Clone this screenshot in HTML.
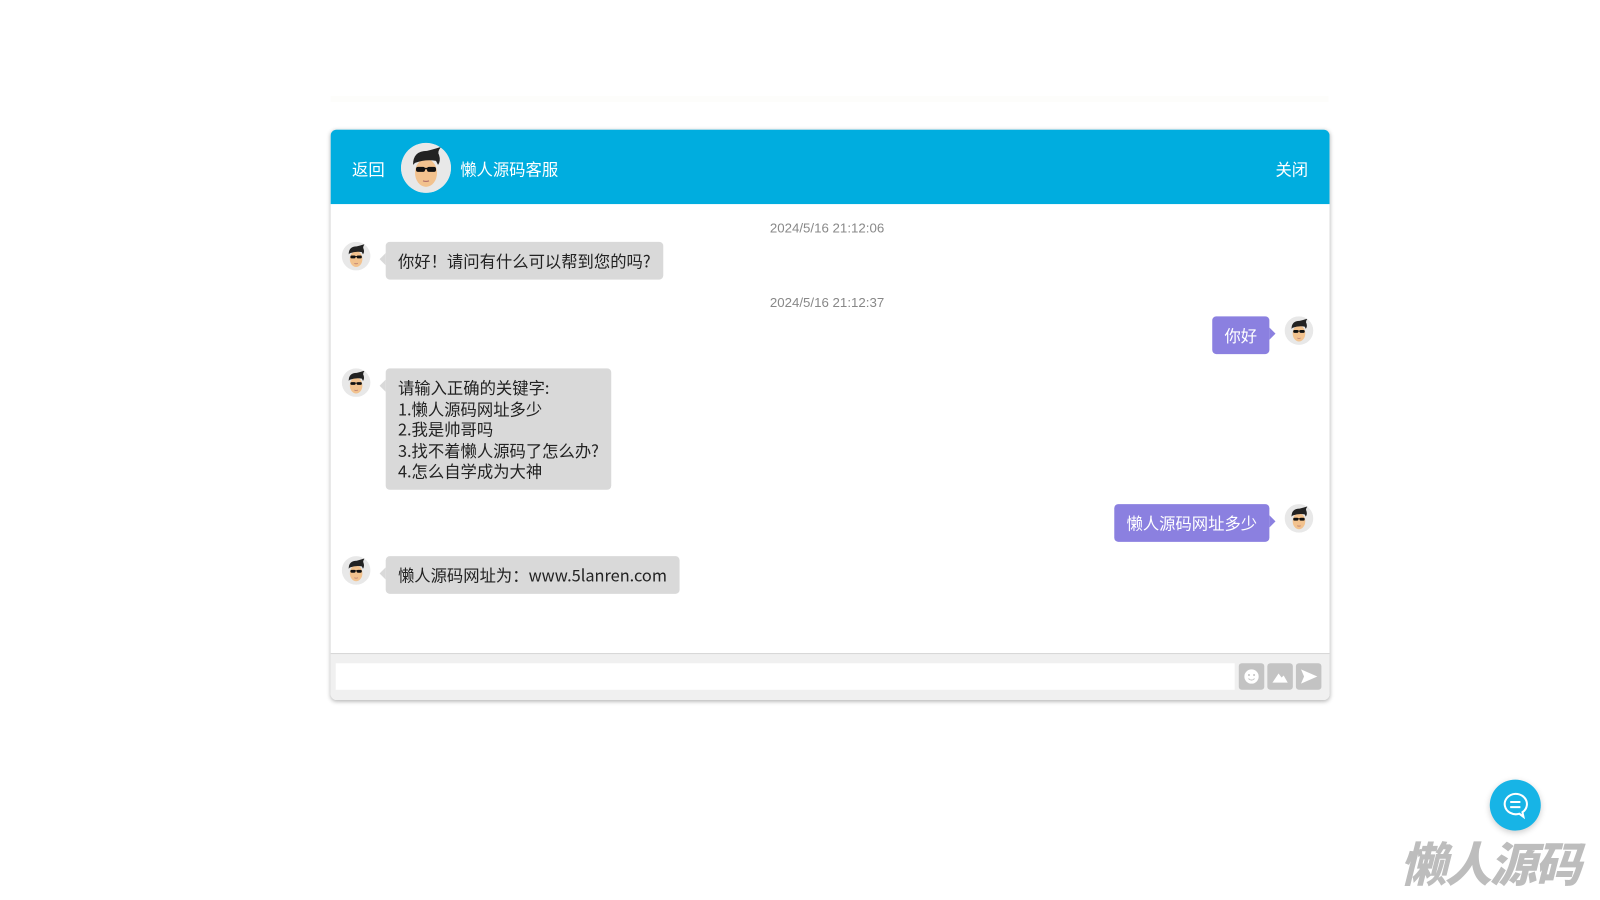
<!DOCTYPE html>
<html><head><meta charset="utf-8"><style>
*{box-sizing:border-box;margin:0;padding:0}
body{width:1600px;height:900px;background:#fff;position:relative;overflow:hidden;font-family:"Liberation Sans","Noto Sans CJK SC",sans-serif;}
#w{position:absolute;left:0;top:0;width:1568px;height:882px;transform:scale(1.0204);transform-origin:0 0}
.top{position:absolute;left:324px;top:94px;width:978px;height:6px;background:#fdfdfb}
.box{position:absolute;left:324px;top:127px;width:979px;height:559px;border-radius:6px;box-shadow:0 1px 4px rgba(0,0,0,.3);background:#fff;overflow:hidden}
.hd{height:73px;background:#00addf;color:#fff;position:relative;font-size:16px;font-family:"Noto Sans CJK SC",sans-serif}
.hd .back{position:absolute;left:21px;top:26px}
.hd .close{position:absolute;right:21px;top:26px}
.hd .name{position:absolute;left:127px;top:26px}
.hd .av{position:absolute;left:69px;top:13px;width:49px;height:49px;border-radius:50%;background:#eee;overflow:hidden}
.ts{position:absolute;width:100%;text-align:center;font-size:13px;color:#888;padding-right:6px}
.av{position:absolute;width:28px;height:28px;border-radius:50%;background:#eee;overflow:hidden}
.b{position:absolute;font-size:16px;line-height:20.5px;padding:8px 12px;border-radius:4px;color:#222;background:#d9d9d9;font-family:"Noto Sans CJK SC","Liberation Sans",sans-serif;white-space:nowrap}
.b.l:before{content:"";position:absolute;left:-6px;top:11px;border:6px solid transparent;border-left:0;border-right-color:#d9d9d9}
.b.r{background:#8b80e0;color:#fff}
.b.r:after{content:"";position:absolute;right:-6px;top:11px;border:6px solid transparent;border-right:0;border-left-color:#8b80e0}
.ft{position:absolute;left:0;top:513px;width:100%;height:46px;border-top:1px solid #d6d6d6;background:#f0f0f0}
.in{position:absolute;left:5px;top:9px;width:881px;height:26px;background:#fff}
.btn{position:absolute;top:9px;width:25px;height:26px;background:#c3c3c3;border-radius:3px}
.fab{position:absolute;left:1460px;top:764px;width:50px;height:50px;border-radius:50%;background:#17b4e6;box-shadow:0 2px 6px rgba(0,0,0,.2)}
.wm{position:absolute;left:1372px;top:812px;font-size:46px;font-weight:900;font-style:italic;color:#bdbdbd;letter-spacing:-2px;font-family:"Noto Sans CJK SC",sans-serif}
</style></head><body>
<svg width="0" height="0" style="position:absolute"><defs>
<symbol id="face" viewBox="0 0 50 50"><circle cx="25" cy="25" r="25" fill="#e8e8e8"/><ellipse cx="25" cy="30" rx="11" ry="14" fill="#f2c28e"/><path d="M12 22 Q12 8 26 8 Q34 6 40 4 Q36 9 38 12 Q40 18 37 22 L35 18 Q25 16 14 20 Z" fill="#222"/><rect x="15" y="24" width="9" height="5" rx="2" fill="#111"/><rect x="26" y="24" width="9" height="5" rx="2" fill="#111"/><rect x="22" y="25" width="6" height="1.5" fill="#111"/><path d="M22 38 Q25 39 28 38" stroke="#a66" fill="none"/></symbol>
</defs></svg>
<div id="w">
<div class="top"></div>
<div class="box">
 <div class="hd"><span class="back">返回</span><div class="av"><svg width="49" height="49"><use href="#face"/></svg></div><span class="name">懒人源码客服</span><span class="close">关闭</span></div>
 <div class="ts" style="top:89px">2024/5/16 21:12:06</div>
 <div class="av" style="left:11px;top:110px"><svg width="28" height="28"><use href="#face"/></svg></div>
 <div class="b l" style="left:54px;top:110px">你好！请问有什么可以帮到您的吗?</div>
 <div class="ts" style="top:162px">2024/5/16 21:12:37</div>
 <div class="av" style="left:935px;top:183px"><svg width="28" height="28"><use href="#face"/></svg></div>
 <div class="b r" style="right:59px;top:183px">你好</div>
 <div class="av" style="left:11px;top:234px"><svg width="28" height="28"><use href="#face"/></svg></div>
 <div class="b l" style="left:54px;top:234px">请输入正确的关键字:<br>1.懒人源码网址多少<br>2.我是帅哥吗<br>3.找不着懒人源码了怎么办?<br>4.怎么自学成为大神</div>
 <div class="av" style="left:935px;top:367px"><svg width="28" height="28"><use href="#face"/></svg></div>
 <div class="b r" style="right:59px;top:367px">懒人源码网址多少</div>
 <div class="av" style="left:11px;top:418px"><svg width="28" height="28"><use href="#face"/></svg></div>
 <div class="b l" style="left:54px;top:418px">懒人源码网址为：www.5lanren.com</div>
 <div class="ft"><div class="in"></div>
  <div class="btn" style="left:890px"><svg width="25" height="26"><circle cx="12.5" cy="13" r="7" fill="#fff"/><circle cx="10" cy="11.5" r="1" fill="#c3c3c3"/><circle cx="15" cy="11.5" r="1" fill="#c3c3c3"/><path d="M9.5 15 Q12.5 18 15.5 15" stroke="#c3c3c3" fill="none"/></svg></div>
  <div class="btn" style="left:918px"><svg width="25" height="26"><path d="M5 19 L11 10 L14 14 L16 12 L20 19 Z" fill="#fff"/></svg></div>
  <div class="btn" style="left:946px"><svg width="25" height="26"><path d="M5 6 L21 13 L5 20 L8 13 Z" fill="#fff"/></svg></div>
 </div>
</div>
<div class="fab"><svg width="50" height="50"><path d="M25 14 a11 10 0 1 0 4 19.5 l4 3 l-1 -4.5 A11 10 0 0 0 25 14z" fill="none" stroke="#fff" stroke-width="2"/><path d="M20 22h10M20 27h10" stroke="#fff" stroke-width="2"/></svg></div>
<div class="wm">懒人源码</div>
</div>
</body></html>
